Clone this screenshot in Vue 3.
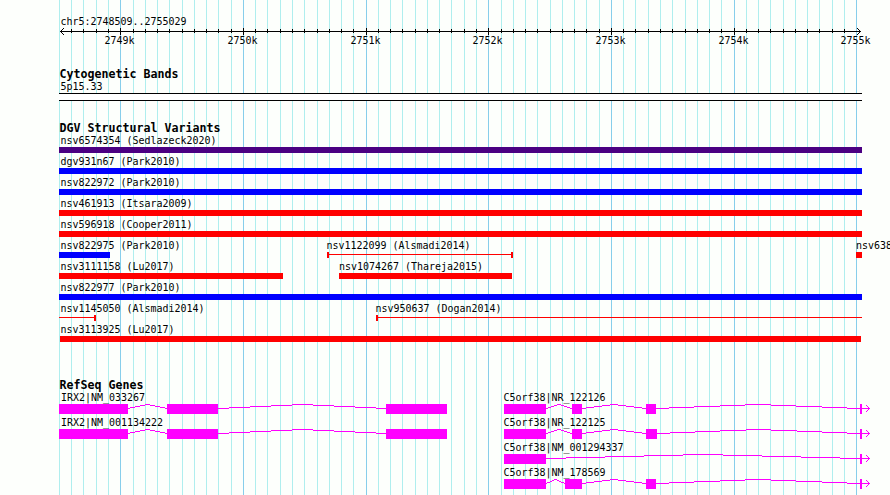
<template>
  <div class="browser">
    <svg class="tracks" width="890" height="495" viewBox="0 0 890 495">
      <g shape-rendering="crispEdges">
        <rect
          v-for="line in gridLines"
          :key="line.x"
          :class="line.major ? 'grid-major' : 'grid-minor'"
          :x="line.x"
          y="0"
          width="1"
          height="495"
        />
      </g>

      <!-- ruler -->
      <g class="ruler" shape-rendering="crispEdges">
        <rect x="60" y="31" width="801" height="1" />
        <rect
          v-for="line in ticks"
          :key="line.x"
          :x="line.x"
          :y="line.major ? 28 : 29"
          width="1"
          :height="line.major ? 7 : 4"
        />
        <path d="M60 31h1v1h-1zM61 30h1v3h-1zM62 29h1v1h-1zM62 33h1v1h-1zM63 28h1v1h-1zM63 34h1v1h-1z" />
        <path d="M860 31h1v1h-1zM859 30h1v3h-1zM858 29h1v1h-1zM858 33h1v1h-1zM857 28h1v1h-1zM857 34h1v1h-1z" />
      </g>

      <!-- cytoband -->
      <g shape-rendering="crispEdges">
        <rect class="band" x="59" y="93" width="803" height="8" />
        <rect x="59" y="93" width="803" height="1" />
        <rect x="59" y="100" width="803" height="1" />
      </g>

      <!-- structural variants -->
      <g shape-rendering="crispEdges">
        <g v-for="v in variants" :key="v.name" :class="v.type">
          <rect v-if="!v.thin" :x="v.start" :y="v.y + 7" :width="v.end - v.start" height="6" />
          <template v-else>
            <rect :x="v.start" :y="v.y + 9" :width="v.end - v.start" height="1" />
            <rect v-if="v.capLeft" :x="v.start" :y="v.y + 7" width="2" height="6" />
            <rect v-if="v.capRight" :x="v.end - 2" :y="v.y + 7" width="2" height="6" />
          </template>
        </g>
      </g>

      <!-- genes -->
      <g v-for="gene in genes" :key="gene.name" class="gene" shape-rendering="crispEdges">
        <rect
          v-for="exon in gene.exons"
          :key="exon[0]"
          :x="exon[0]"
          :y="gene.y + 6"
          :width="exon[1] - exon[0]"
          height="10"
        />
        <path class="intron" :d="introns(gene)" />
        <path v-if="gene.arrow" :d="arrow(gene.y + 10)" />
      </g>

      <text
        v-for="label in labels"
        :key="label.text + label.y"
        :class="{ heading: label.bold }"
        :x="label.x"
        :y="label.y"
        :textLength="label.text.length * (label.bold ? 7 : 6)"
        lengthAdjust="spacingAndGlyphs"
      >{{ label.text }}</text>
    </svg>
  </div>
</template>

<script setup>
const gridLines = Array.from({ length: 66 }, (_, i) => ({
  x: Math.round(120.25 + (i - 5) * 12.267),
  major: i % 10 === 5
}))
const ticks = gridLines.slice(1, -1)

// y is the middle of the label, the glyph is drawn below it
const variants = [
  { name: 'nsv6574354 (Sedlazeck2020)', type: 'complex', start: 59, end: 862, y: 140 },
  { name: 'dgv931n67 (Park2010)', type: 'gain', start: 59, end: 862, y: 161 },
  { name: 'nsv822972 (Park2010)', type: 'gain', start: 59, end: 862, y: 182 },
  { name: 'nsv461913 (Itsara2009)', type: 'loss', start: 59, end: 862, y: 203 },
  { name: 'nsv596918 (Cooper2011)', type: 'loss', start: 59, end: 862, y: 224 },
  { name: 'nsv822975 (Park2010)', type: 'gain', start: 59, end: 110, y: 245 },
  { name: 'nsv1122099 (Alsmadi2014)', type: 'loss', start: 327, end: 513, y: 245, thin: true, capLeft: true, capRight: true },
  { name: 'nsv638', type: 'loss', start: 856, end: 862, y: 245 },
  { name: 'nsv3111158 (Lu2017)', type: 'loss', start: 59, end: 283, y: 266 },
  { name: 'nsv1074267 (Thareja2015)', type: 'loss', start: 339, end: 512, y: 266 },
  { name: 'nsv822977 (Park2010)', type: 'gain', start: 59, end: 862, y: 287 },
  { name: 'nsv1145050 (Alsmadi2014)', type: 'loss', start: 59, end: 96, y: 308, thin: true, capRight: true },
  { name: 'nsv950637 (Dogan2014)', type: 'loss', start: 376, end: 862, y: 308, thin: true, capLeft: true },
  { name: 'nsv3113925 (Lu2017)', type: 'loss', start: 60, end: 861, y: 329 }
]

const irxExons = [[59, 128], [167, 218], [386, 447]]
const genes = [
  { name: 'IRX2|NM_033267', y: 398, exons: irxExons },
  { name: 'IRX2|NM_001134222', y: 423, exons: irxExons },
  { name: 'C5orf38|NR_122126', y: 398, exons: [[504, 546], [572, 582], [646, 656], [860, 862]], arrow: true },
  { name: 'C5orf38|NR_122125', y: 423, exons: [[504, 546], [572, 582], [646, 657], [860, 862]], arrow: true },
  { name: 'C5orf38|NM_001294337', y: 448, exons: [[504, 546], [860, 862]], arrow: true },
  { name: 'C5orf38|NM_178569', y: 473, exons: [[504, 546], [565, 582], [646, 656], [860, 862]], arrow: true }
]

// hat between two exons, climbs 4px in whole pixel steps and comes back down
const introns = ({ y, exons }) => {
  const base = y + 10.5
  return exons.slice(1).map((exon, i) => {
    const from = exons[i][1]
    const to = exon[0]
    const step = (to - from) / 8
    let d = ''
    for (let k = 0; k <= 8; k++) {
      const x1 = Math.round(Math.max(from, from + (k - 0.5) * step))
      const x2 = Math.round(Math.min(to, from + (k + 0.5) * step))
      d += `M${x1} ${base - 4 + Math.abs(k - 4)}H${x2}`
    }
    return d
  }).join('')
}

const arrow = (y) => {
  let d = `M862 ${y}h8v1h-8z`
  for (let k = 1; k <= 3; k++) {
    d += `M${869 - k} ${y - k}h1v1h-1zM${869 - k} ${y + k}h1v1h-1z`
  }
  return d
}

const labels = [
  { text: 'chr5:2748509..2755029', x: 60.5, y: 25 },
  { text: 'Cytogenetic Bands', x: 59.5, y: 78, bold: true },
  { text: '5p15.33', x: 60.5, y: 90 },
  { text: 'DGV Structural Variants', x: 59.5, y: 132, bold: true },
  { text: 'RefSeq Genes', x: 59.5, y: 389, bold: true },
  ...gridLines.filter(l => l.major).map((l, i) => ({ text: `${2749 + i}k`, x: l.x - 15.5, y: 44 })),
  ...variants.map(v => ({
    text: v.name,
    x: v.start < 61 ? 60.5 : v.start - (v.thin ? 0.5 : 0),
    y: v.y + 4
  })),
  ...genes.map(g => ({ text: g.name, x: g.exons[0][0] < 61 ? 61 : 503.5, y: g.y + 3 }))
]
</script>

<style scoped>
.browser {
  width: 890px;
  height: 495px;
  overflow: hidden;
  background: #fdfffc;
}

.tracks {
  display: block;
}

.grid-minor {
  fill: #afeeee;
}

.grid-major {
  fill: #87ceeb;
}

.band {
  fill: #fff;
}

.complex {
  fill: #4b0082;
}

.gain {
  fill: #0000ff;
}

.loss {
  fill: #ff0000;
}

.gene {
  fill: #ff00ff;
}

.intron {
  fill: none;
  stroke: #ff00ff;
  stroke-width: 1;
}

text {
  font-family: "DejaVu Sans Mono", "Liberation Mono", monospace;
  font-size: 11px;
  fill: #000;
  white-space: pre;
}

.heading {
  font-size: 11.5px;
  font-weight: bold;
}
</style>
